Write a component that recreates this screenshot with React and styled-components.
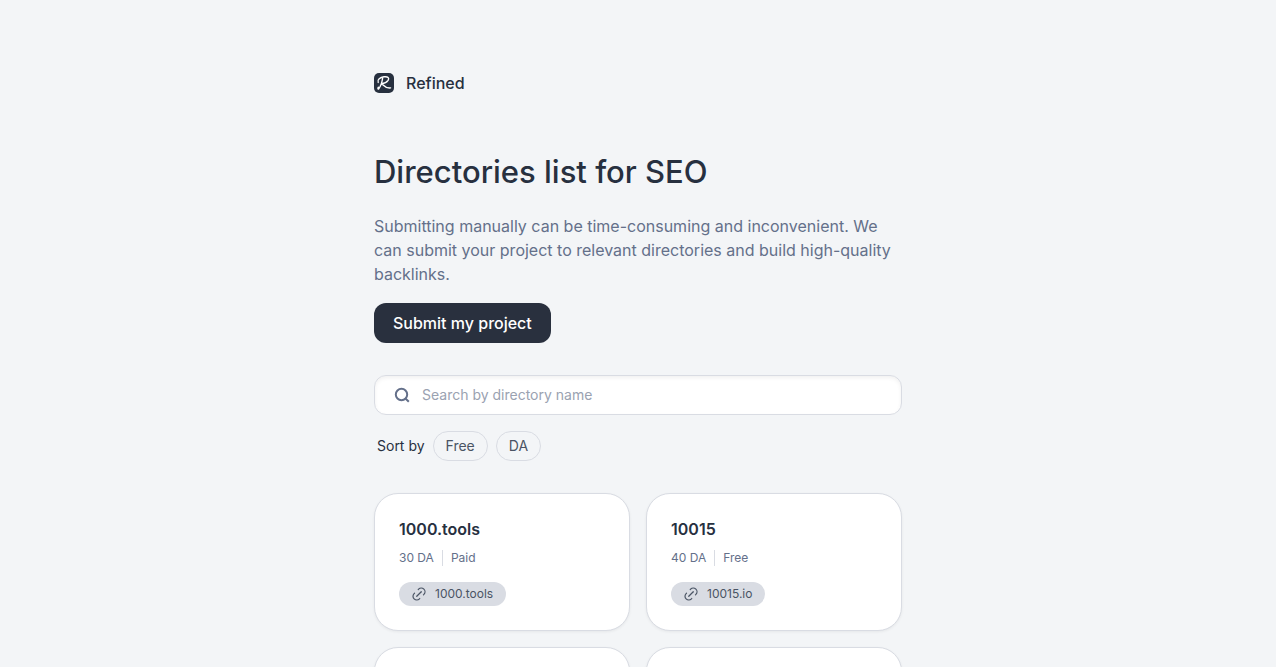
import React, { useState } from "react";
import styled, { createGlobalStyle } from "styled-components";

const GlobalStyle = createGlobalStyle`
  *, *::before, *::after { box-sizing: border-box; }
  body {
    margin: 0;
    background: #f3f5f7;
    color: #27303f;
    font-family: Inter, "Liberation Sans", sans-serif;
    font-size: 16px;
    line-height: 24px;
  }
`;

const Page = styled.main`
  max-width: 576px;
  margin: 0 auto;
  padding: 71px 24px;
`;

const Brand = styled.a`
  display: flex;
  align-items: center;
  gap: 12px;
  width: fit-content;
  color: #27303f;
  font-weight: 500;
  text-decoration: none;
`;

const Title = styled.h1`
  margin: 56px 0 21px;
  font-size: 31px;
  line-height: 42px;
  font-weight: 550;
`;

const Intro = styled.p`
  margin: 0 0 17px;
  color: #64708a;
`;

const SubmitButton = styled.button`
  display: block;
  height: 40px;
  padding: 0 19px;
  border: 0;
  border-radius: 12px;
  background: #29303e;
  color: #ffffff;
  font: inherit;
  font-weight: 500;
  cursor: pointer;
`;

const SearchField = styled.label`
  display: flex;
  align-items: center;
  gap: 12px;
  height: 40px;
  margin-top: 32px;
  padding: 0 19px;
  border: 1px solid #d9dce3;
  border-radius: 12px;
  background: #ffffff;
  box-shadow: inset 0 2px 4px rgba(0, 0, 0, 0.06);
  color: #64708a;
`;

const SearchInput = styled.input`
  flex: 1;
  min-width: 0;
  padding: 0;
  border: 0;
  outline: 0;
  background: transparent;
  color: #27303f;
  font: inherit;
  font-size: 14px;
  &::placeholder { color: #9aa2b1; opacity: 1; }
`;

const SortBar = styled.div`
  display: flex;
  align-items: center;
  gap: 8px;
  margin: 16px 0 32px;
  padding-left: 3px;
  font-size: 14px;
`;

const SortChip = styled.button`
  height: 30px;
  padding: 0 12px;
  border: 1px solid #d9dce3;
  border-radius: 15px;
  background: ${(p) => (p.$active ? "#d9dce3" : "transparent")};
  color: #4a5464;
  font: inherit;
  cursor: pointer;
`;

const Grid = styled.section`
  display: grid;
  grid-template-columns: 1fr 1fr;
  gap: 16px;
`;

const Card = styled.article`
  min-height: 138px;
  padding: 23px 24px 24px;
  border: 1px solid #d9dce3;
  border-radius: 24px;
  background: #ffffff;
  box-shadow: 0 1px 3px rgba(0, 0, 0, 0.06);
`;

const CardTitle = styled.h2`
  margin: 0 0 9px;
  font-size: 16px;
  line-height: 24px;
  font-weight: 600;
`;

const Meta = styled.div`
  display: flex;
  margin-bottom: 16px;
  color: #64708a;
  font-size: 12px;
  line-height: 16px;
`;

const MetaItem = styled.span`
  & + & {
    margin-left: 8px;
    padding-left: 8px;
    border-left: 1px solid #d9dce3;
  }
`;

const SiteLink = styled.a`
  display: inline-flex;
  align-items: center;
  gap: 7px;
  height: 24px;
  padding: 0 13px 0 11px;
  border-radius: 12px;
  background: #d9dce3;
  color: #4a5464;
  font-size: 12px;
  line-height: 16px;
  text-decoration: none;
  vertical-align: top;
`;

const Logo = () => (
  <svg width="20" height="20" viewBox="0 0 20 20" fill="none" aria-hidden="true">
    <rect width="20" height="20" rx="5" fill="#27303f" />
    <path
      d="M8.6 5.5C7.9 9.5 6.9 13 4.7 15.9C3.9 16.5 3.6 15.2 4.4 14.2M4.2 9.4C2.9 6.8 6.2 4.3 10 3.8C14 3.3 15.6 5 14.1 7.4C12.8 9.3 10.3 10.4 7.6 10.6C9.4 12 11.3 15.6 16.6 14.9"
      stroke="#ffffff"
      strokeWidth="1.4"
      strokeLinecap="round"
      strokeLinejoin="round"
    />
  </svg>
);

const SearchIcon = () => (
  <svg width="16" height="16" viewBox="0 0 16 16" fill="none" stroke="currentColor" strokeWidth="2" aria-hidden="true">
    <circle cx="7.5" cy="7.5" r="5.7" />
    <path d="M11.2 11.2L14.8 14.8" />
  </svg>
);

const LinkIcon = () => (
  <svg width="18" height="18" viewBox="0 0 24 24" fill="none" stroke="currentColor" strokeWidth="1.6" strokeLinecap="round" strokeLinejoin="round" aria-hidden="true">
    <path d="M9 15l6-6" />
    <path d="M11 6l.463-.536a5 5 0 0 1 7.071 7.072L18 13" />
    <path d="M13 18l-.397.534a5.068 5.068 0 0 1-7.127 0 4.972 4.972 0 0 1 0-7.071L6 11" />
  </svg>
);

const directories = [
  { name: "1000.tools", authority: 30, price: "Paid", site: "1000.tools" },
  { name: "10015", authority: 40, price: "Free", site: "10015.io" },
];

export default function App() {
  const [query, setQuery] = useState("");
  const [sort, setSort] = useState(null);
  const shown = directories
    .filter((d) => d.name.includes(query.toLowerCase()))
    .sort((a, b) => {
      if (sort === "DA") return b.authority - a.authority;
      if (sort === "Free") return a.price.localeCompare(b.price);
      return 0;
    });

  return (
    <>
      <GlobalStyle />
      <Page>
        <Brand href="#">
          <Logo />
          Refined
        </Brand>
        <Title>Directories list for SEO</Title>
        <Intro>
          Submitting manually can be time-consuming and inconvenient. We can submit your project to
          relevant directories and build high-quality backlinks.
        </Intro>
        <SubmitButton type="button">Submit my project</SubmitButton>
        <SearchField htmlFor="directory-search">
          <SearchIcon />
          <SearchInput
            id="directory-search"
            type="text"
            placeholder="Search by directory name"
            value={query}
            onChange={(e) => setQuery(e.target.value)}
          />
        </SearchField>
        <SortBar>
          <span>Sort by</span>
          {["Free", "DA"].map((key) => (
            <SortChip key={key} type="button" $active={sort === key} onClick={() => setSort(key)}>
              {key}
            </SortChip>
          ))}
        </SortBar>
        <Grid>
          {shown.map((d) => (
            <Card key={d.name}>
              <CardTitle>{d.name}</CardTitle>
              <Meta>
                <MetaItem>{d.authority} DA</MetaItem>
                <MetaItem>{d.price}</MetaItem>
              </Meta>
              <SiteLink href={`https://${d.site}`}>
                <LinkIcon />
                {d.site}
              </SiteLink>
            </Card>
          ))}
          <Card />
          <Card />
        </Grid>
      </Page>
    </>
  );
}
